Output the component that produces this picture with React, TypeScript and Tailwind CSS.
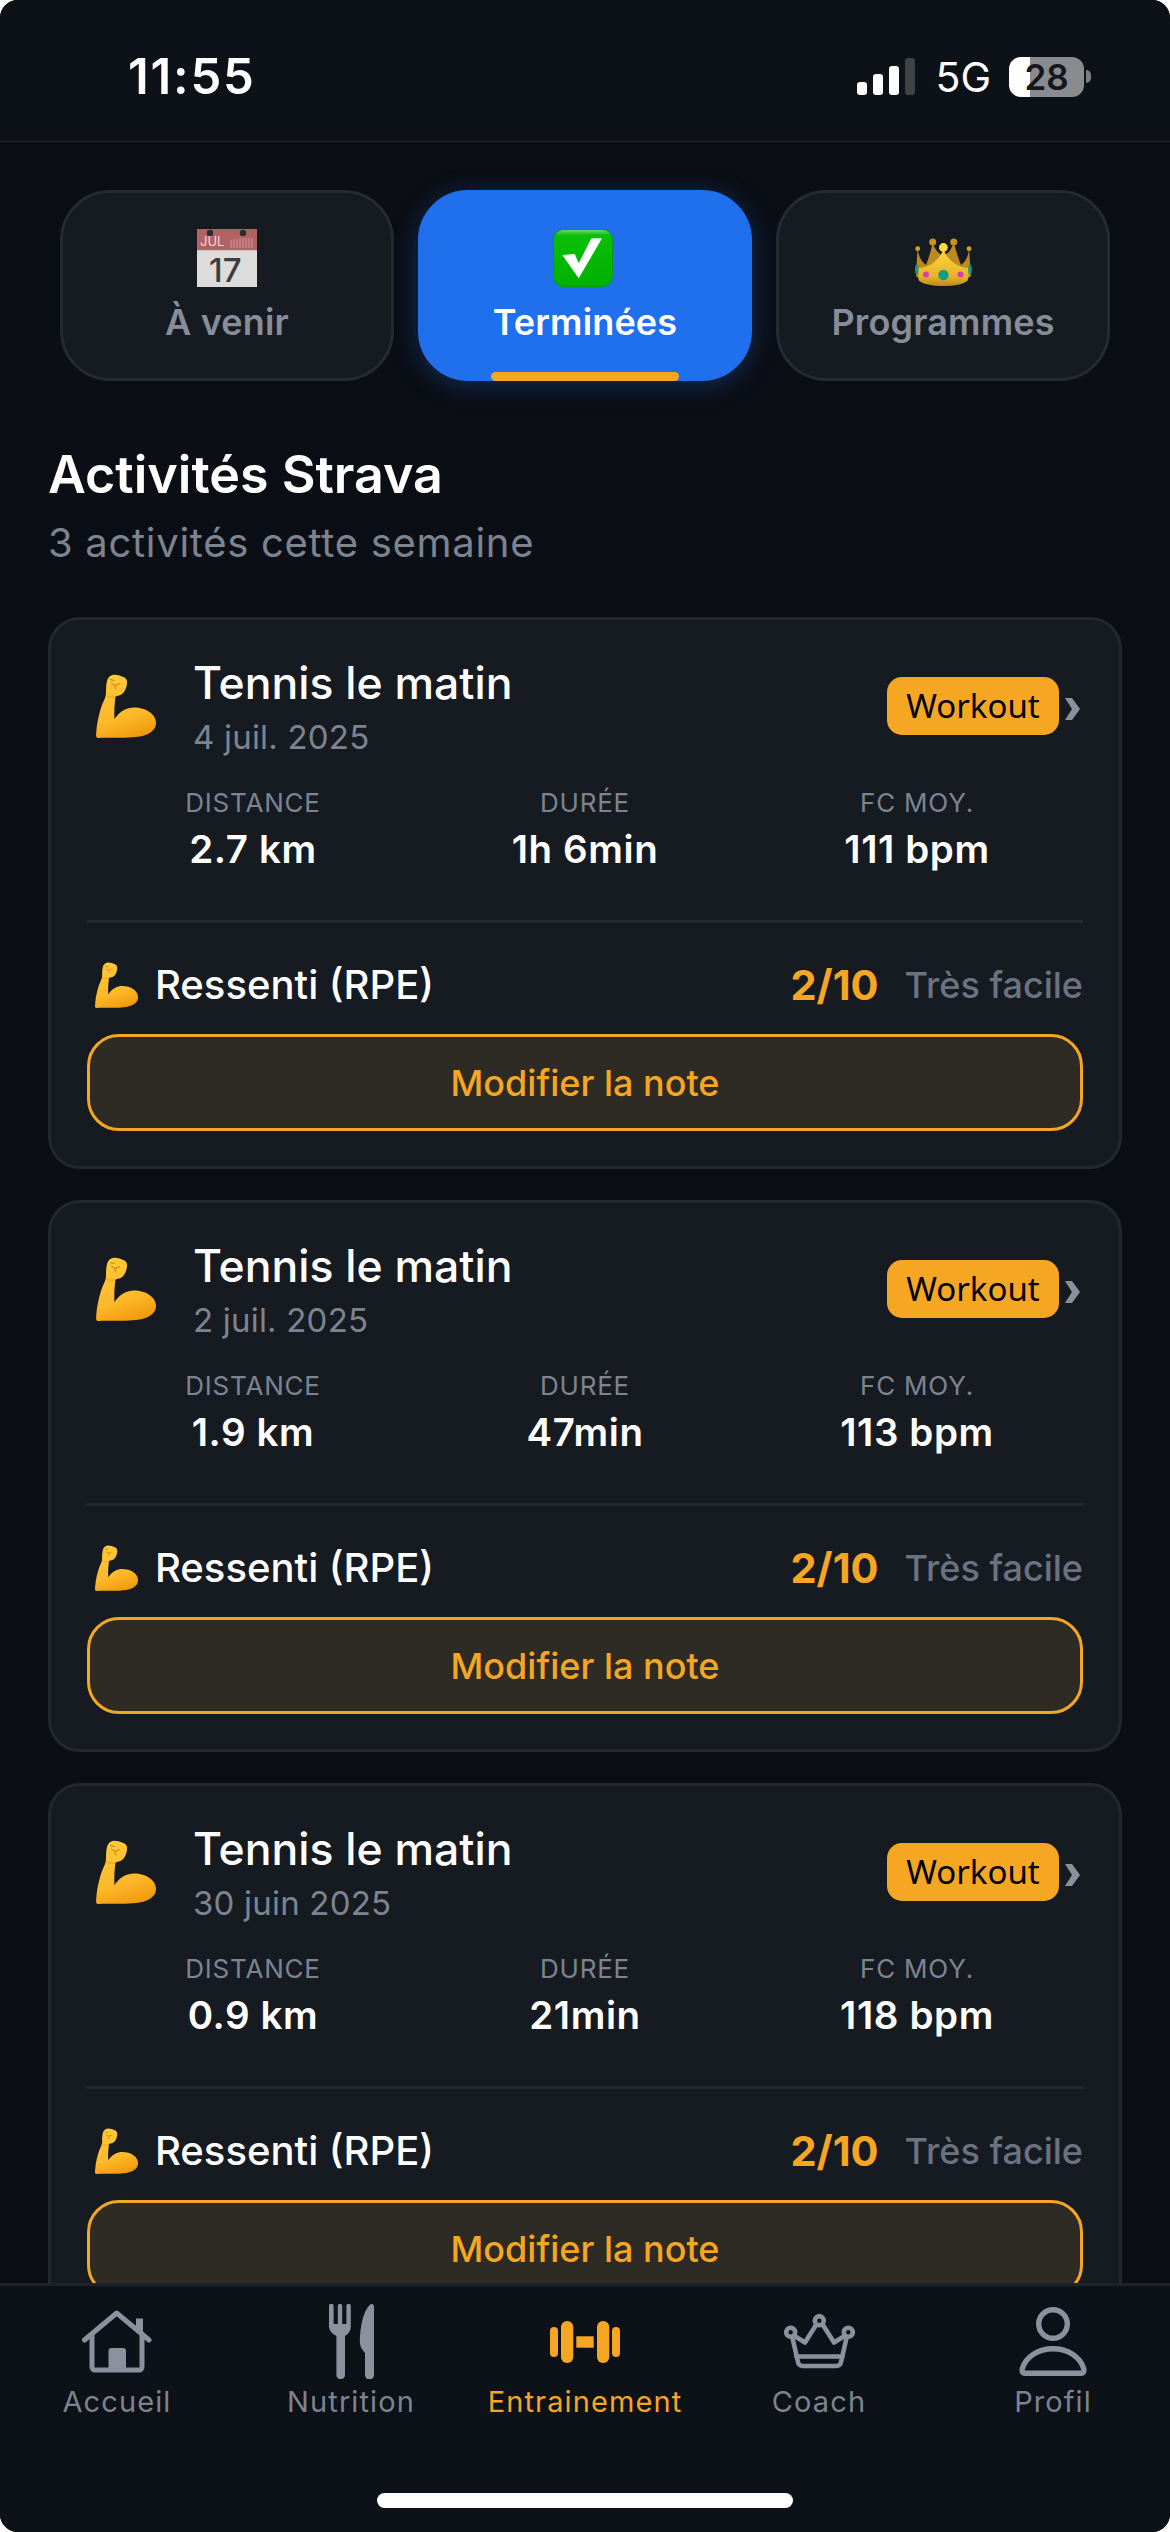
import React from "react";

const ORANGE = "#f5a623";

function Arm({ className }: { className: string }) {
  return (
    <svg viewBox="0 0 60 64" className={className}>
      <defs>
        <linearGradient id="armG" x1="0.3" y1="0" x2="0.6" y2="1">
          <stop offset="0" stopColor="#ffc93a" />
          <stop offset="0.65" stopColor="#fdb92a" />
          <stop offset="1" stopColor="#f09a0c" />
        </linearGradient>
      </defs>
      <path
        d="M11 7C12 4 14 1 18 .8 21 .6 25 2 28.500 3.500 31 4.800 31.500 8 30.800 11 30 15 28 19.500 24.500 21 22.500 21.800 20.500 22 19.500 22.500 18.500 30 18 38 18.500 45 24 37 31 33.500 38 33.500 50 33.500 60 40 60 49 60 58 50 62 40 63 28 64.500 14 63 2 64 0 64-.2 62 .3 58 1 48 3.500 38 6 31 8 26 10 23 10 19 10 15 10 11 11 7Z"
        fill="url(#armG)"
      />
      <path d="M15 9l4 2.500 5-2M18.500 11.500l1.500 4M14 5.500l4.500 1" stroke="#c97c08" strokeWidth="1" fill="none" />
      <path d="M10.500 22c3 1.500 6.500 1.500 9 .5" stroke="#e8a01a" strokeWidth="1" fill="none" />
    </svg>
  );
}

function CalendarEmoji() {
  return (
    <svg viewBox="0 0 60 58" className="w-[60px] h-[58px]">
      <rect x="0" y="0" width="60" height="58" fill="#dcdcdc" />
      <rect x="0" y="0" width="60" height="21" fill="#b26262" />
      <rect x="0" y="21" width="60" height="1.2" fill="#c9c9c9" />
      <circle cx="13" cy="4" r="3.2" fill="#2c2c30" />
      <circle cx="46" cy="4" r="3.2" fill="#2c2c30" />
      <text x="3" y="17" fontFamily="Inter, sans-serif" fontSize="13" fill="#f0dcdc">
        JUL
      </text>
      <path
        d="M34 11v8M37 10v9M40 10v9M43 9v10M46 9v10M49 9v10M52 9v10M55 9v10"
        stroke="#d49a9a"
        strokeWidth="1"
      />
      <text x="12" y="53" fontFamily="Inter, sans-serif" fontSize="33" fontWeight="500" fill="#3c3c3c">
        17
      </text>
    </svg>
  );
}

function CheckEmoji() {
  return (
    <svg viewBox="0 0 60 58" className="w-[60px] h-[58px] -translate-x-[2px]">
      <defs>
        <linearGradient id="chkG" x1="0" y1="0" x2="0" y2="1">
          <stop offset="0" stopColor="#7fd67f" />
          <stop offset="0.1" stopColor="#0abf0a" />
          <stop offset="1" stopColor="#00b000" />
        </linearGradient>
      </defs>
      <rect x="0.5" y="0.5" width="59" height="57" rx="10" fill="url(#chkG)" stroke="#0a9a0a" />
      <polygon points="9.3,26 21.7,25 25.7,34.3 38.3,9.3 49,9.3 25.7,49.3" fill="#fff" />
    </svg>
  );
}

function CrownEmoji() {
  return (
    <svg viewBox="0 0 57 49" className="w-[57px] h-[49px]">
      <defs>
        <linearGradient id="crG" x1="0" y1="0" x2="0" y2="1">
          <stop offset="0" stopColor="#ffd83a" />
          <stop offset="0.75" stopColor="#e6b22a" />
          <stop offset="1" stopColor="#b98a1c" />
        </linearGradient>
      </defs>
      <path
        d="M2.5 11C4 20 7 24 11 27 14 20 16 12 17.7 5 20 12 24 16 28.4 18 33 16 36 12 38.7 5 41 12 43 20 46 27 50 24 53 20 54 11L56 38C50 45 7 45 1 38Z"
        fill="#bd8a22"
      />
      <path
        d="M28.4 11C25 22 14 30 3 30L3.5 42C10 50 47 50 53 42L54 30C43 30 32 22 28.4 11Z"
        fill="url(#crG)"
      />
      <circle cx="17.7" cy="4" r="3.5" fill="#c8931f" />
      <circle cx="38.7" cy="4" r="3.5" fill="#c8931f" />
      <circle cx="2.7" cy="10.7" r="2.4" fill="#d69f22" />
      <circle cx="54" cy="10.7" r="2.4" fill="#d69f22" />
      <circle cx="28.4" cy="9.5" r="4.4" fill="#ffdc3c" />
      <circle cx="28.4" cy="37" r="5.2" fill="#0f9f80" />
      <circle cx="11" cy="36.5" r="3" fill="#d63fae" />
      <circle cx="45.5" cy="36.5" r="3" fill="#d63fae" />
      <ellipse cx="1.8" cy="31.5" rx="1.8" ry="5" fill="#159a80" />
      <ellipse cx="55" cy="31.5" rx="1.8" ry="5" fill="#159a80" />
    </svg>
  );
}

function HomeIcon() {
  return (
    <svg viewBox="0 0 70 63" className="w-[70px] h-[63px]" fill="none" stroke="#8b929e" strokeWidth="5" strokeLinecap="round" strokeLinejoin="round">
      <path d="M2.5 30L34.7 3 67 30" />
      <path d="M10 24V57a3 3 0 0 0 3 3H57a3 3 0 0 0 3-3V24" />
      <path d="M57.5 22V8.5" strokeWidth="7" strokeLinecap="butt" />
      <path d="M26.5 60V41a3 3 0 0 1 3-3H41a3 3 0 0 1 3 3V60Z" fill="#8b929e" stroke="none" />
    </svg>
  );
}

function ForkIcon() {
  return (
    <svg viewBox="0 0 45 75" className="w-[45px] h-[75px]" fill="#8b929e">
      <path d="M0 2a2.2 2.2 0 0 1 4.6 0V20H8.8V2a2.2 2.2 0 0 1 4.4 0V20H17.4V2a2.2 2.2 0 0 1 4.4 0V22C21.8 27 19 30.500 16 32V71a4.300 4.300 0 0 1-8.600 0V32C4 30.500 0 27 0 22Z" />
      <path d="M41 .5C43.500-.8 45 .5 45 3V71a4.500 4.500 0 0 1-9 0V49C33 46 30.600 42 30.800 37 31.200 24 33.500 8 41 .5Z" />
    </svg>
  );
}

function DumbbellIcon() {
  return (
    <svg viewBox="0 0 70 42" className="w-[70px] h-[42px]" fill={ORANGE}>
      <rect x="0" y="6" width="8" height="30" rx="4" />
      <rect x="11" y="0" width="12.300" height="42" rx="6" />
      <rect x="26.300" y="15.300" width="17.400" height="11.400" />
      <rect x="47" y="0" width="12.300" height="42" rx="6" />
      <rect x="62" y="6" width="8" height="30" rx="4" />
    </svg>
  );
}

function CrownIcon() {
  return (
    <svg viewBox="0 0 71 55" className="w-[71px] h-[55px]" fill="none" stroke="#8b929e" strokeWidth="4.600" strokeLinecap="round" strokeLinejoin="round">
      <circle cx="35.300" cy="6.700" r="4.500" />
      <circle cx="6.700" cy="18.300" r="4.500" />
      <circle cx="64.300" cy="18.300" r="4.500" />
      <path d="M10.500 22L21 28.500 32 11M39 11L50 28.500 60.500 22" />
      <path d="M8.500 24L14 48a4.500 4.500 0 0 0 4.500 4H52.500a4.500 4.500 0 0 0 4.500-4L62.500 24" />
      <path d="M12.500 42.500H58.500" />
    </svg>
  );
}

function PersonIcon() {
  return (
    <svg viewBox="0 0 68 69" className="w-[68px] h-[69px]" fill="none" stroke="#8b929e" strokeWidth="5.400" strokeLinejoin="round">
      <ellipse cx="34" cy="17" rx="14.300" ry="14.300" />
      <path d="M6 66.200C3.500 66.200 2.500 64 3.500 61 7 50 19 41.700 34 41.700 49 41.700 61 50 64.500 61 65.500 64 64.500 66.200 62 66.200Z" />
    </svg>
  );
}

function StatusBar() {
  return (
    <div className="h-[142px] shrink-0 bg-[#0d1118] border-b border-[#28251f] flex items-center justify-between pl-[128px] pr-[79px] pt-[12px]">
      <span className="text-[49px] leading-[56px] font-semibold tracking-[1.8px] text-white">11:55</span>
      <div className="flex items-center">
        <div className="flex items-end gap-[6px] h-[37px]">
          <div className="w-[10px] h-[13px] rounded-[3px] bg-white" />
          <div className="w-[10px] h-[21px] rounded-[3px] bg-white" />
          <div className="w-[10px] h-[29px] rounded-[3px] bg-white" />
          <div className="w-[10px] h-[37px] rounded-[3px] bg-[#3f4247]" />
        </div>
        <span className="ml-[20px] text-[41px] leading-[44px] text-white">5G</span>
        <div className="ml-[18px] w-[75px] h-[40px] rounded-[12px] bg-[linear-gradient(90deg,#ffffff_28%,#8a8b8f_28%)] flex items-center justify-center text-[35px] leading-[40px] font-semibold text-[#15171c]">
          28
        </div>
        <div className="ml-[2px] w-[5px] h-[13px] rounded-r-[5px] bg-[#7d7e82]" />
      </div>
    </div>
  );
}

function Tab({ icon, label, active }: { icon: React.ReactNode; label: string; active?: boolean }) {
  return (
    <div
      className={
        active
          ? "relative h-[191px] rounded-[50px] border-[3px] border-[#206fec] bg-[#206fec] shadow-[0_4px_26px_rgba(32,111,236,0.3)] flex flex-col items-center pt-[36px]"
          : "relative h-[191px] rounded-[50px] border-[3px] border-[#252a33] bg-[#161b22] flex flex-col items-center pt-[36px]"
      }
    >
      <div className="h-[58px] flex items-end justify-center">{icon}</div>
      <span
        className={
          active
            ? "mt-[13px] text-[36px] leading-[44px] font-semibold tracking-[0.15px] text-white"
            : "mt-[13px] text-[36px] leading-[44px] font-semibold tracking-[0.15px] text-[#878e9a]"
        }
      >
        {label}
      </span>
      {active && <div className="absolute bottom-[-3px] left-[70px] w-[188px] h-[9px] rounded-[5px] bg-[#f5a623]" />}
    </div>
  );
}

function Stat({ label, value }: { label: string; value: string }) {
  return (
    <div className="flex flex-col items-center">
      <span className="text-[26px] leading-[32px] tracking-[0.8px] text-[#7d8490]">{label}</span>
      <span className="mt-[7px] text-[38.500px] leading-[46px] font-semibold tracking-[0.6px] text-white">{value}</span>
    </div>
  );
}

function Card({ date, dist, dur, hr }: { date: string; dist: string; dur: string; hr: string }) {
  return (
    <div className="shrink-0 rounded-[32px] border-[3px] border-[#232830] bg-[#161b22] px-[36px] pt-[35px] pb-[35px]">
      <div className="flex items-center">
        <Arm className="ml-[9px] w-[60px] h-[64px] shrink-0" />
        <div className="ml-[37px] flex-1">
          <div className="text-[44.500px] leading-[56px] font-medium text-white">Tennis le matin</div>
          <div className="mt-[6px] text-[33px] leading-[40px] tracking-[0.2px] text-[#7d8490]">{date}</div>
        </div>
        <div className="w-[172px] h-[58px] rounded-[15px] bg-[#f5a623] flex items-center justify-center font-['Noto_Sans',sans-serif] text-[33px] leading-[40px] text-black">
          Workout
        </div>
        <svg viewBox="0 0 16 22" className="mt-[5px] ml-[5px] mr-[3px] w-[16px] h-[22px]" fill="#8a909c">
          <path d="M1 0H8L16 11 8 22H1L8 11Z" />
        </svg>
      </div>
      <div className="mt-[30px] grid grid-cols-3">
        <Stat label="DISTANCE" value={dist} />
        <Stat label="DURÉE" value={dur} />
        <Stat label="FC MOY." value={hr} />
      </div>
      <div className="mt-[48px] h-[3px] bg-[#222730]" />
      <div className="mt-[39px] h-[46px] flex items-center">
        <Arm className="ml-[7px] w-[45px] h-[46px] shrink-0" />
        <span className="ml-[16px] text-[40px] leading-[46px] font-medium text-white flex-1">Ressenti (RPE)</span>
        <span className="text-[41.500px] leading-[46px] font-bold text-[#f5a623]">2/10</span>
        <span className="ml-[26px] text-[36px] leading-[46px] font-medium text-[#6b7280]">Très facile</span>
      </div>
      <div className="mt-[26px] h-[97px] rounded-[32px] border-[3px] border-[#f5a623] bg-[#2e2a24] flex items-center justify-center text-[36px] leading-[44px] font-medium text-[#f5a623]">
        Modifier la note
      </div>
    </div>
  );
}

function NavItem({ icon, label, active }: { icon: React.ReactNode; label: string; active?: boolean }) {
  return (
    <div className="flex flex-col items-center">
      <div className="h-[75px] flex items-center justify-center">{icon}</div>
      <span
        className={
          active
            ? "mt-[5px] text-[29px] leading-[36px] tracking-[1.1px] text-[#f5a623]"
            : "mt-[5px] text-[29px] leading-[36px] tracking-[1.1px] text-[#7d8490]"
        }
      >
        {label}
      </span>
    </div>
  );
}

export default function App() {
  return (
    <div className="w-[1170px] h-[2532px] bg-white">
      <div className="w-full h-full rounded-[18px] overflow-hidden bg-[#0b0e15] flex flex-col font-['Inter',sans-serif]">
        <StatusBar />
        <div className="flex-1 min-h-0 overflow-hidden px-[48px]">
          <div className="mt-[48px] px-[12px] grid grid-cols-3 gap-[24px]">
            <Tab icon={<CalendarEmoji />} label="À venir" />
            <Tab icon={<CheckEmoji />} label="Terminées" active />
            <Tab icon={<CrownEmoji />} label="Programmes" />
          </div>
          <h1 className="mt-[64px] text-[52px] leading-[60px] font-semibold text-white">Activités Strava</h1>
          <p className="mt-[14px] text-[40px] leading-[48px] tracking-[0.7px] text-[#7d8490]">3 activités cette semaine</p>
          <div className="mt-[50px] flex flex-col gap-[31px]">
            <Card date="4 juil. 2025" dist="2.7 km" dur="1h 6min" hr="111 bpm" />
            <Card date="2 juil. 2025" dist="1.9 km" dur="47min" hr="113 bpm" />
            <Card date="30 juin 2025" dist="0.9 km" dur="21min" hr="118 bpm" />
          </div>
        </div>
        <div className="h-[249px] shrink-0 bg-[#0d1118] border-t-[3px] border-[#1d222b] flex flex-col">
          <div className="mt-[18px] grid grid-cols-5">
            <NavItem icon={<HomeIcon />} label="Accueil" />
            <NavItem icon={<ForkIcon />} label="Nutrition" />
            <NavItem icon={<DumbbellIcon />} label="Entrainement" active />
            <NavItem icon={<CrownIcon />} label="Coach" />
            <NavItem icon={<PersonIcon />} label="Profil" />
          </div>
          <div className="mt-[73px] mx-auto w-[416px] h-[15px] rounded-full bg-white" />
        </div>
      </div>
    </div>
  );
}
